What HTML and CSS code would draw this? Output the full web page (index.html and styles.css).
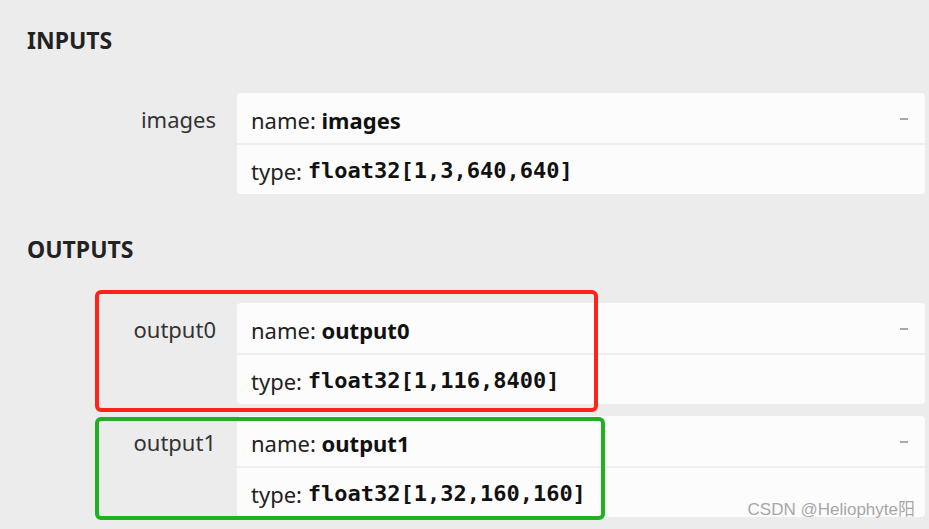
FILE: index.html
```html
<!DOCTYPE html>
<html>
<head>
<meta charset="utf-8">
<link rel="stylesheet" href="styles.css">
</head>
<body>
<div class="page">
  <h2 class="section first">INPUTS</h2>
  <div class="arg">
    <div class="label">images</div>
    <div class="card">
      <div class="row name">name: <b>images</b><span class="toggle"></span></div>
      <div class="row type">type: <code>float32[1,3,640,640]</code></div>
    </div>
  </div>
  <h2 class="section">OUTPUTS</h2>
  <div class="arg">
    <div class="label">output0</div>
    <div class="card">
      <div class="row name">name: <b>output0</b><span class="toggle"></span></div>
      <div class="row type">type: <code>float32[1,116,8400]</code></div>
    </div>
    <div class="mark mark-red"></div>
  </div>
  <div class="arg next">
    <div class="label">output1</div>
    <div class="card">
      <div class="row name">name: <b>output1</b><span class="toggle"></span></div>
      <div class="row type">type: <code>float32[1,32,160,160]</code></div>
    </div>
    <div class="mark mark-green"></div>
  </div>
  <div class="watermark">CSDN @Heliophyte阳</div>
</div>
</body>
</html>
```
FILE: styles.css
```css
html, body {
  margin: 0;
  padding: 0;
  background: #ececec;
}
body {
  font-family: "Noto Sans", "Open Sans", "Noto Sans CJK SC", sans-serif;
  color: #222;
  width: 929px;
  height: 529px;
  overflow: hidden;
}
.page {
  position: relative;
  height: 529px;
  padding: 25px 4px 0 27px;
  box-sizing: border-box;
}
.section {
  margin: 40px 0 39px 0;
  height: 30px;
  line-height: 30px;
  font-size: 23px;
  font-weight: 700;
  color: #222;
}
.section.first {
  margin-top: 0;
  margin-bottom: 38px;
}
.arg {
  position: relative;
  display: grid;
  grid-template-columns: 210px 1fr;
}
.arg.next {
  margin-top: 12px;
}
.label {
  text-align: right;
  padding-right: 21px;
  font-size: 22px;
  line-height: 52px;
  height: 52px;
  color: #333;
}
.card {
  background: #fcfcfc;
  border-radius: 4px;
  display: flex;
  flex-direction: column;
}
.row {
  position: relative;
  display: flex;
  align-items: center;
  padding-left: 14px;
  font-size: 22px;
  color: #222;
  white-space: pre;
}
.row.name {
  height: 50px;
  padding-top: 3px;
  box-sizing: border-box;
  border-bottom: 2px solid #efefef;
  height: 52px;
}
.row.type {
  height: 49px;
  padding-top: 2px;
  box-sizing: border-box;
}
.row b {
  font-weight: 700;
  color: #111;
}
.row code {
  font-family: "DejaVu Sans Mono", "Liberation Mono", monospace;
  font-weight: 700;
  font-size: 22px;
  color: #111;
}
.toggle {
  position: absolute;
  right: 17px;
  top: 25px;
  width: 8px;
  height: 2px;
  background: #a8a8a8;
}
.mark {
  position: absolute;
  border-radius: 6px;
  box-sizing: border-box;
  pointer-events: none;
}
.mark-red {
  left: 68px;
  top: -13px;
  width: 503px;
  height: 122px;
  border: 4px solid #ff2318;
}
.mark-green {
  left: 68px;
  top: 1px;
  width: 510px;
  height: 103px;
  border: 4px solid #20b024;
}
.watermark {
  position: absolute;
  right: 14px;
  bottom: 9px;
  font-family: "Liberation Sans", "Noto Sans CJK SC", sans-serif;
  font-size: 17px;
  color: #a6a6a6;
  text-shadow: 0 0 1px #fff;
}
```
